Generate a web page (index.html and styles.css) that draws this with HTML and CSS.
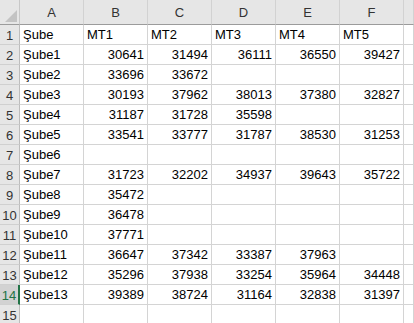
FILE: index.html
```html
<!DOCTYPE html>
<html>
<head>
<meta charset="utf-8">
<link rel="stylesheet" href="styles.css">
</head>
<body>
<div class="sheet">
  <div class="row head">
    <div class="corner"><span class="tri"></span></div>
    <div class="ch">A</div><div class="ch">B</div><div class="ch">C</div><div class="ch">D</div><div class="ch">E</div><div class="ch">F</div><div class="ch"></div>
  </div>
  <div class="row"><div class="rh">1</div><div class="c t">Şube</div><div class="c t">MT1</div><div class="c t">MT2</div><div class="c t">MT3</div><div class="c t">MT4</div><div class="c t">MT5</div><div class="c"></div></div>
  <div class="row"><div class="rh">2</div><div class="c t">Şube1</div><div class="c n">30641</div><div class="c n">31494</div><div class="c n">36111</div><div class="c n">36550</div><div class="c n">39427</div><div class="c"></div></div>
  <div class="row"><div class="rh">3</div><div class="c t">Şube2</div><div class="c n">33696</div><div class="c n">33672</div><div class="c n"></div><div class="c n"></div><div class="c n"></div><div class="c"></div></div>
  <div class="row"><div class="rh">4</div><div class="c t">Şube3</div><div class="c n">30193</div><div class="c n">37962</div><div class="c n">38013</div><div class="c n">37380</div><div class="c n">32827</div><div class="c"></div></div>
  <div class="row"><div class="rh">5</div><div class="c t">Şube4</div><div class="c n">31187</div><div class="c n">31728</div><div class="c n">35598</div><div class="c n"></div><div class="c n"></div><div class="c"></div></div>
  <div class="row"><div class="rh">6</div><div class="c t">Şube5</div><div class="c n">33541</div><div class="c n">33777</div><div class="c n">31787</div><div class="c n">38530</div><div class="c n">31253</div><div class="c"></div></div>
  <div class="row"><div class="rh">7</div><div class="c t">Şube6</div><div class="c n"></div><div class="c n"></div><div class="c n"></div><div class="c n"></div><div class="c n"></div><div class="c"></div></div>
  <div class="row"><div class="rh">8</div><div class="c t">Şube7</div><div class="c n">31723</div><div class="c n">32202</div><div class="c n">34937</div><div class="c n">39643</div><div class="c n">35722</div><div class="c"></div></div>
  <div class="row"><div class="rh">9</div><div class="c t">Şube8</div><div class="c n">35472</div><div class="c n"></div><div class="c n"></div><div class="c n"></div><div class="c n"></div><div class="c"></div></div>
  <div class="row"><div class="rh">10</div><div class="c t">Şube9</div><div class="c n">36478</div><div class="c n"></div><div class="c n"></div><div class="c n"></div><div class="c n"></div><div class="c"></div></div>
  <div class="row"><div class="rh">11</div><div class="c t">Şube10</div><div class="c n">37771</div><div class="c n"></div><div class="c n"></div><div class="c n"></div><div class="c n"></div><div class="c"></div></div>
  <div class="row"><div class="rh">12</div><div class="c t">Şube11</div><div class="c n">36647</div><div class="c n">37342</div><div class="c n">33387</div><div class="c n">37963</div><div class="c n"></div><div class="c"></div></div>
  <div class="row"><div class="rh">13</div><div class="c t">Şube12</div><div class="c n">35296</div><div class="c n">37938</div><div class="c n">33254</div><div class="c n">35964</div><div class="c n">34448</div><div class="c"></div></div>
  <div class="row"><div class="rh sel">14</div><div class="c t">Şube13</div><div class="c n">39389</div><div class="c n">38724</div><div class="c n">31164</div><div class="c n">32838</div><div class="c n">31397</div><div class="c"></div></div>
  <div class="row"><div class="rh">15</div><div class="c t"></div><div class="c n"></div><div class="c n"></div><div class="c n"></div><div class="c n"></div><div class="c n"></div><div class="c"></div></div>
</div>
</body>
</html>
```

FILE: styles.css
```css
html, body {
  margin: 0;
  padding: 0;
  background: #ffffff;
  overflow: hidden;
}
.sheet {
  font-family: "Liberation Sans", Arial, sans-serif;
  font-size: 13px;
  color: #000;
}
.row {
  display: grid;
  grid-template-columns: 20px repeat(6, 64px) 1fr;
  height: 20px;
}
.row.head {
  height: 25px;
}
.row > div {
  box-sizing: border-box;
  border-right: 1px solid #d4d4d4;
  border-bottom: 1px solid #d4d4d4;
  white-space: nowrap;
  overflow: hidden;
}
.corner {
  position: relative;
  background: #e6e6e6;
  border-bottom: 1px solid #9b9b9b !important;
  border-right: 1px solid #c8c8c8 !important;
}
.tri {
  position: absolute;
  right: 2px;
  bottom: 2px;
  width: 0;
  height: 0;
  border-left: 12px solid transparent;
  border-bottom: 12px solid #c3c3c3;
}
.ch {
  background: #e6e6e6;
  color: #333;
  border-bottom: 1px solid #9b9b9b !important;
  border-right: 1px solid #d2d2d2 !important;
  display: flex;
  align-items: center;
  justify-content: center;
  padding-top: 1px;
}
.rh {
  background: #e6e6e6;
  color: #333;
  border-right: 1px solid #bdbdbd !important;
  border-bottom: 1px solid #d0d0d0 !important;
  display: flex;
  align-items: center;
  justify-content: center;
  padding-top: 1px;
}
.rh.sel {
  background: #d2d2d2;
  color: #217346;
  border-right: 2px solid #217346 !important;
}
.c {
  display: flex;
  align-items: flex-end;
  padding: 0 3px 2px 3px;
  line-height: 15px;
}
.c.n {
  justify-content: flex-end;
}
```
